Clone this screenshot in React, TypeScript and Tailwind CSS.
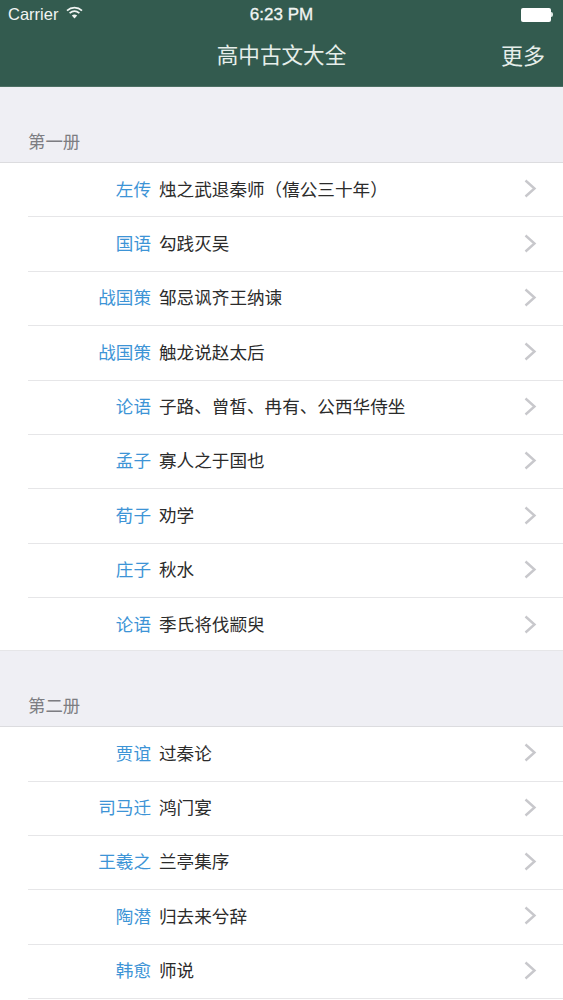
const SECTIONS = [
  {
    title: "第一册",
    items: [
      ["左传", "烛之武退秦师（僖公三十年）"],
      ["国语", "勾践灭吴"],
      ["战国策", "邹忌讽齐王纳谏"],
      ["战国策", "触龙说赵太后"],
      ["论语", "子路、曾皙、冉有、公西华侍坐"],
      ["孟子", "寡人之于国也"],
      ["荀子", "劝学"],
      ["庄子", "秋水"],
      ["论语", "季氏将伐颛臾"],
    ],
  },
  {
    title: "第二册",
    items: [
      ["贾谊", "过秦论"],
      ["司马迁", "鸿门宴"],
      ["王羲之", "兰亭集序"],
      ["陶潜", "归去来兮辞"],
      ["韩愈", "师说"],
      ["", ""],
    ],
  },
];

function Chevron() {
  return (
    <svg width="13" height="19" viewBox="0 0 13 19" fill="none" className="shrink-0">
      <path d="M1.5 1.5 L10.5 9.5 L1.5 17.5" stroke="#c8c8cc" strokeWidth="2.4" />
    </svg>
  );
}

function StatusBar() {
  return (
    <div className="relative flex h-[29px] items-center pl-2 pr-[10px] font-['Liberation_Sans',sans-serif] text-[16.5px] text-[#f1f5f3]">
      <span>Carrier</span>
      <svg width="17" height="13" viewBox="0 0 17 13" fill="none" className="ml-[8px] -mt-1">
        <path d="M1 4.6 C5.4 0.6 11.6 0.6 16 4.6" stroke="#f1f5f3" strokeWidth="1.7" />
        <path d="M3.6 7.2 C6.6 4.6 10.4 4.6 13.4 7.2" stroke="#f1f5f3" strokeWidth="1.7" />
        <path d="M8.5 12.6 L5.8 9.6 C7.4 8.2 9.6 8.2 11.2 9.6 Z" fill="#f1f5f3" />
      </svg>
      <span className="absolute inset-x-0 text-center text-[17px] font-medium [-webkit-text-stroke:0.3px_#f1f5f3]">6:23 PM</span>
      <div className="ml-auto flex items-center">
        <div className="h-[14px] w-[30px] rounded-[2px] bg-white" />
        <div className="h-[5px] w-[2px] rounded-r-sm bg-[#dfe8e4]" />
      </div>
    </div>
  );
}

export default function App() {
  return (
    <div className="h-[1000px] w-[563px] overflow-hidden bg-[#efeff4] font-['Noto_Sans_CJK_SC',sans-serif]">
      <header className="h-[87px] border-b border-[#4d7064] bg-[#335b4f]">
        <StatusBar />
        <div className="relative flex h-[56px] items-center justify-end pb-[5px] pr-[18px] text-[22px] text-[#e6eeea]">
          <span className="absolute inset-x-0 text-center text-[21.6px]">高中古文大全</span>
          <span>更多</span>
        </div>
      </header>
      {SECTIONS.map((section) => (
        <section key={section.title}>
          <div className="flex h-[75px] items-end pb-[8px] pl-[28px] text-[17.4px] leading-[26px] text-[#7d7d82]">
            {section.title}
          </div>
          <ul className="border-t border-[#dcdcdf] bg-white">
            {section.items.map(([author, name], i) => (
              <li key={i} className={i === 8 ? "border-b border-[#e6e6e8] pl-[28px]" : "pl-[28px]"}>
                <div
                  className={
                    i === 8
                      ? "flex h-[52px] items-center pr-[26px] text-[17.6px]"
                      : "flex h-[54.4px] items-center border-b border-[#e6e6e8] pb-[2px] pr-[26px] text-[17.6px]"
                  }
                >
                  <span className="w-[123px] text-right text-[#3d94d6]">{author}</span>
                  <span className="ml-[8px] flex-1 text-[#2b2b2b]">{name}</span>
                  <Chevron />
                </div>
              </li>
            ))}
          </ul>
        </section>
      ))}
    </div>
  );
}
